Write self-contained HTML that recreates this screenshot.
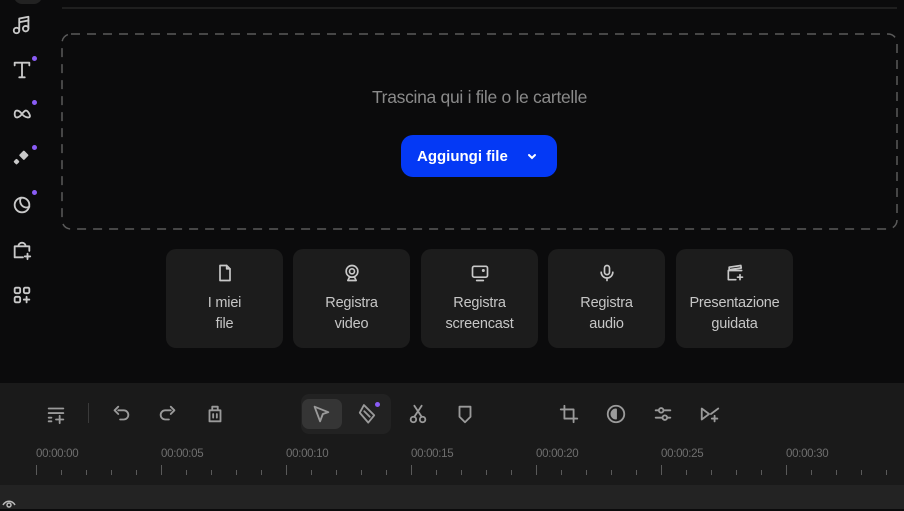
<!DOCTYPE html>
<html><head><meta charset="utf-8"><style>
*{margin:0;padding:0;box-sizing:border-box}
body{width:904px;height:509px;background:#0b0b0c;font-family:"Liberation Sans",sans-serif;position:relative;overflow:hidden;color:#c8c8c8}
.abs{position:absolute}
.side svg{position:absolute;left:11px;width:22px;height:22px;fill:none;stroke:#c9c9c9;stroke-width:2;stroke-linecap:round;stroke-linejoin:round}
.dot{position:absolute;width:5px;height:5px;border-radius:50%;background:#8a5cf6}
.card{position:absolute;top:249px;width:117px;height:99px;background:#1c1c1c;border-radius:10px;text-align:center;font-size:14.5px;line-height:21px;color:#c6c6c6;letter-spacing:-0.2px}
.card svg{display:block;margin:14px auto 10px;width:20px;height:20px;fill:none;stroke:#c9c9c9;stroke-width:2;stroke-linecap:round;stroke-linejoin:round}
.tb svg{position:absolute;top:403px;width:22px;height:22px;fill:none;stroke:#9a9a9a;stroke-width:2;stroke-linecap:round;stroke-linejoin:round}
.lbl{position:absolute;top:448px;font-size:11.5px;color:#6e6e6e;letter-spacing:-0.3px}
</style></head><body>
<div class="abs" style="left:14px;top:-14px;width:28px;height:18px;border-radius:8px;background:#222"></div>
<div class="abs" style="left:62px;top:7px;width:835px;height:2px;background:#1f1f1f"></div>
<div class="side">
<svg style="top:14px" viewBox="0 0 24 24"><path d="M9 18V5l10-2v13"/><circle cx="6" cy="18" r="3"/><circle cx="16" cy="16" r="3"/><path d="M9 9l10-2"/></svg>
<svg style="top:59px" viewBox="0 0 24 24"><path d="M4 7V4h16v3M12 4v16M9 20h6"/></svg>
<div class="dot" style="left:32px;top:56px"></div>
<svg style="top:103px" viewBox="0 0 24 24"><path d="M12 12C9 8 4 6 4 12s5 4 8 0 5-6 8 0-5 4-8 0z"/></svg>
<div class="dot" style="left:32px;top:100px"></div>
<svg style="top:147px" viewBox="0 0 24 24"><path d="M14 5l4 4-4 4-4-4z" fill="#c9c9c9"/><path d="M6 14l2 2-2 2-2-2z" fill="#c9c9c9"/></svg>
<div class="dot" style="left:32px;top:145px"></div>
<svg style="top:194px" viewBox="0 0 24 24"><circle cx="12" cy="12" r="8"/><path d="M11 4a7 7 0 0 0 9 10"/></svg>
<div class="dot" style="left:32px;top:190px"></div>
<svg style="top:239px" viewBox="0 0 24 24"><path d="M20 13V8H4v12h9M8 8a4 4 0 0 1 8 0M18 16v6M15 19h6"/></svg>
<svg style="top:284px" viewBox="0 0 24 24"><rect x="4" y="4" width="6" height="6" rx="1.5"/><rect x="14" y="4" width="6" height="6" rx="1.5"/><rect x="4" y="14" width="6" height="6" rx="1.5"/><path d="M17 14v6M14 17h6"/></svg>
</div>
<svg class="abs" style="left:61px;top:33px" width="837" height="197"><rect x="1" y="1" width="835" height="195" rx="9" fill="none" stroke="#5a5a5a" stroke-width="1.5" stroke-dasharray="9 7"/></svg>
<div class="abs" style="left:62px;top:87px;width:835px;text-align:center;font-size:17.5px;color:#8a8a8a;letter-spacing:-0.3px">Trascina qui i file o le cartelle</div>
<div class="abs" style="left:401px;top:135px;width:156px;height:42px;background:#0439f5;border-radius:12px;color:#fff;font-weight:bold;font-size:15px;line-height:44px;padding-left:16px">Aggiungi file<svg style="position:absolute;left:126px;top:17px;width:10px;height:10px" viewBox="0 0 10 10"><path d="M2 3l3 3 3-3" fill="none" stroke="#fff" stroke-width="2" stroke-linecap="round"/></svg></div>
<div class="card" style="left:166px"><svg viewBox="0 0 24 24"><path d="M6 3h8l4 4v14H6z"/><path d="M14 3v4h4"/></svg>I miei<br>file</div>
<div class="card" style="left:293px"><svg viewBox="0 0 24 24"><circle cx="12" cy="10" r="7"/><circle cx="12" cy="10" r="3"/><path d="M7 21l2-4h6l2 4z"/></svg>Registra<br>video</div>
<div class="card" style="left:421px"><svg viewBox="0 0 24 24"><rect x="3" y="4" width="18" height="13" rx="2"/><path d="M8 21h8"/><circle cx="16" cy="9" r="0.8"/></svg>Registra<br>screencast</div>
<div class="card" style="left:548px"><svg viewBox="0 0 24 24"><rect x="9" y="3" width="6" height="11" rx="3"/><path d="M5 11a7 7 0 0 0 14 0M12 18v3"/></svg>Registra<br>audio</div>
<div class="card" style="left:676px"><svg viewBox="0 0 24 24"><path d="M4 9h16M4 9v11h9M5 5l14-2 .5 3L5 8z"/><path d="M18 14v6M15 17h6"/></svg>Presentazione<br>guidata</div>
<div class="abs" style="left:0;top:383px;width:904px;height:102px;background:#1a1a1a"></div>
<div class="abs" style="left:0;top:485px;width:904px;height:24px;background:#232323"></div>
<div class="abs" style="left:301px;top:394px;width:90px;height:40px;background:#222;border-radius:8px"></div>
<div class="abs" style="left:302px;top:399px;width:40px;height:30px;background:#353535;border-radius:7px"></div>
<div class="abs" style="left:88px;top:403px;width:1px;height:20px;background:#3a3a3a"></div>
<div class="dot" style="left:375px;top:402px"></div>
<div class="tb">
<svg style="left:45px" viewBox="0 0 24 24"><path d="M4 6h16M4 11h16M4 16h3M4 20h3M16 14v8M12 18h8"/></svg>
<svg style="left:110px" viewBox="0 0 24 24"><path d="M9 8H15a5 5 0 0 1 0 10h-4M9 4L5 8l4 4"/></svg>
<svg style="left:157px" viewBox="0 0 24 24"><path d="M15 8H9a5 5 0 0 0 0 10h4M15 4l4 4-4 4"/></svg>
<svg style="left:204px" viewBox="0 0 24 24"><path d="M6 8h12v12H6zM9 8V4h6v4M10 12v4M14 12v4"/></svg>
<svg style="left:310px" viewBox="0 0 24 24"><path d="M5 4l15 6-6 2-3 8z"/></svg>
<svg style="left:356px" viewBox="0 0 24 24"><path d="M7 3l13 9-5 9L4 12z" transform="rotate(10 12 12)"/><path d="M9 9l6 6"/></svg>
<svg style="left:407px" viewBox="0 0 24 24"><circle cx="7" cy="18" r="3"/><circle cx="17" cy="18" r="3"/><path d="M8 15L16 3M16 15L8 3"/></svg>
<svg style="left:454px" viewBox="0 0 24 24"><path d="M6 4h12v11l-6 6-6-6z"/></svg>
<svg style="left:558px" viewBox="0 0 24 24"><path d="M7 3v14h14M3 7h14v14"/></svg>
<svg style="left:605px" viewBox="0 0 24 24"><circle cx="12" cy="12" r="9"/><path d="M12 7a5 5 0 0 0 0 10z" fill="#9a9a9a"/></svg>
<svg style="left:652px" viewBox="0 0 24 24"><path d="M4 8h16M4 16h16"/><circle cx="10" cy="8" r="2.5" fill="#1a1a1a"/><circle cx="14" cy="16" r="2.5" fill="#1a1a1a"/></svg>
<svg style="left:699px" viewBox="0 0 24 24"><path d="M3 6l8 6-8 6zM21 6l-8 6M17 14v6M14 17h6"/></svg>
</div>
<div class="lbl" style="left:36px">00:00:00</div>
<div class="lbl" style="left:161px">00:00:05</div>
<div class="lbl" style="left:286px">00:00:10</div>
<div class="lbl" style="left:411px">00:00:15</div>
<div class="lbl" style="left:536px">00:00:20</div>
<div class="lbl" style="left:661px">00:00:25</div>
<div class="lbl" style="left:786px">00:00:30</div>
<svg class="abs" style="left:0;top:465px" width="904" height="12">
<g stroke="#5a5a5a" stroke-width="1">
<path d="M36.5 0v10M161.5 0v10M286.5 0v10M411.5 0v10M536.5 0v10M661.5 0v10M786.5 0v10"/>
<path d="M61.5 5v5M86.5 5v5M111.5 5v5M136.5 5v5M186.5 5v5M211.5 5v5M236.5 5v5M261.5 5v5M311.5 5v5M336.5 5v5M361.5 5v5M386.5 5v5M436.5 5v5M461.5 5v5M486.5 5v5M511.5 5v5M561.5 5v5M586.5 5v5M611.5 5v5M636.5 5v5M686.5 5v5M711.5 5v5M736.5 5v5M761.5 5v5M811.5 5v5M836.5 5v5M861.5 5v5M886.5 5v5"/>
</g></svg>
<svg class="abs" style="left:2px;top:499px" width="14" height="12" viewBox="0 0 14 12"><path d="M1 6c3-5 9-5 12 0" fill="none" stroke="#bbb" stroke-width="1.5"/><circle cx="7" cy="6" r="2" fill="none" stroke="#bbb" stroke-width="1.5"/></svg>
</body></html>
